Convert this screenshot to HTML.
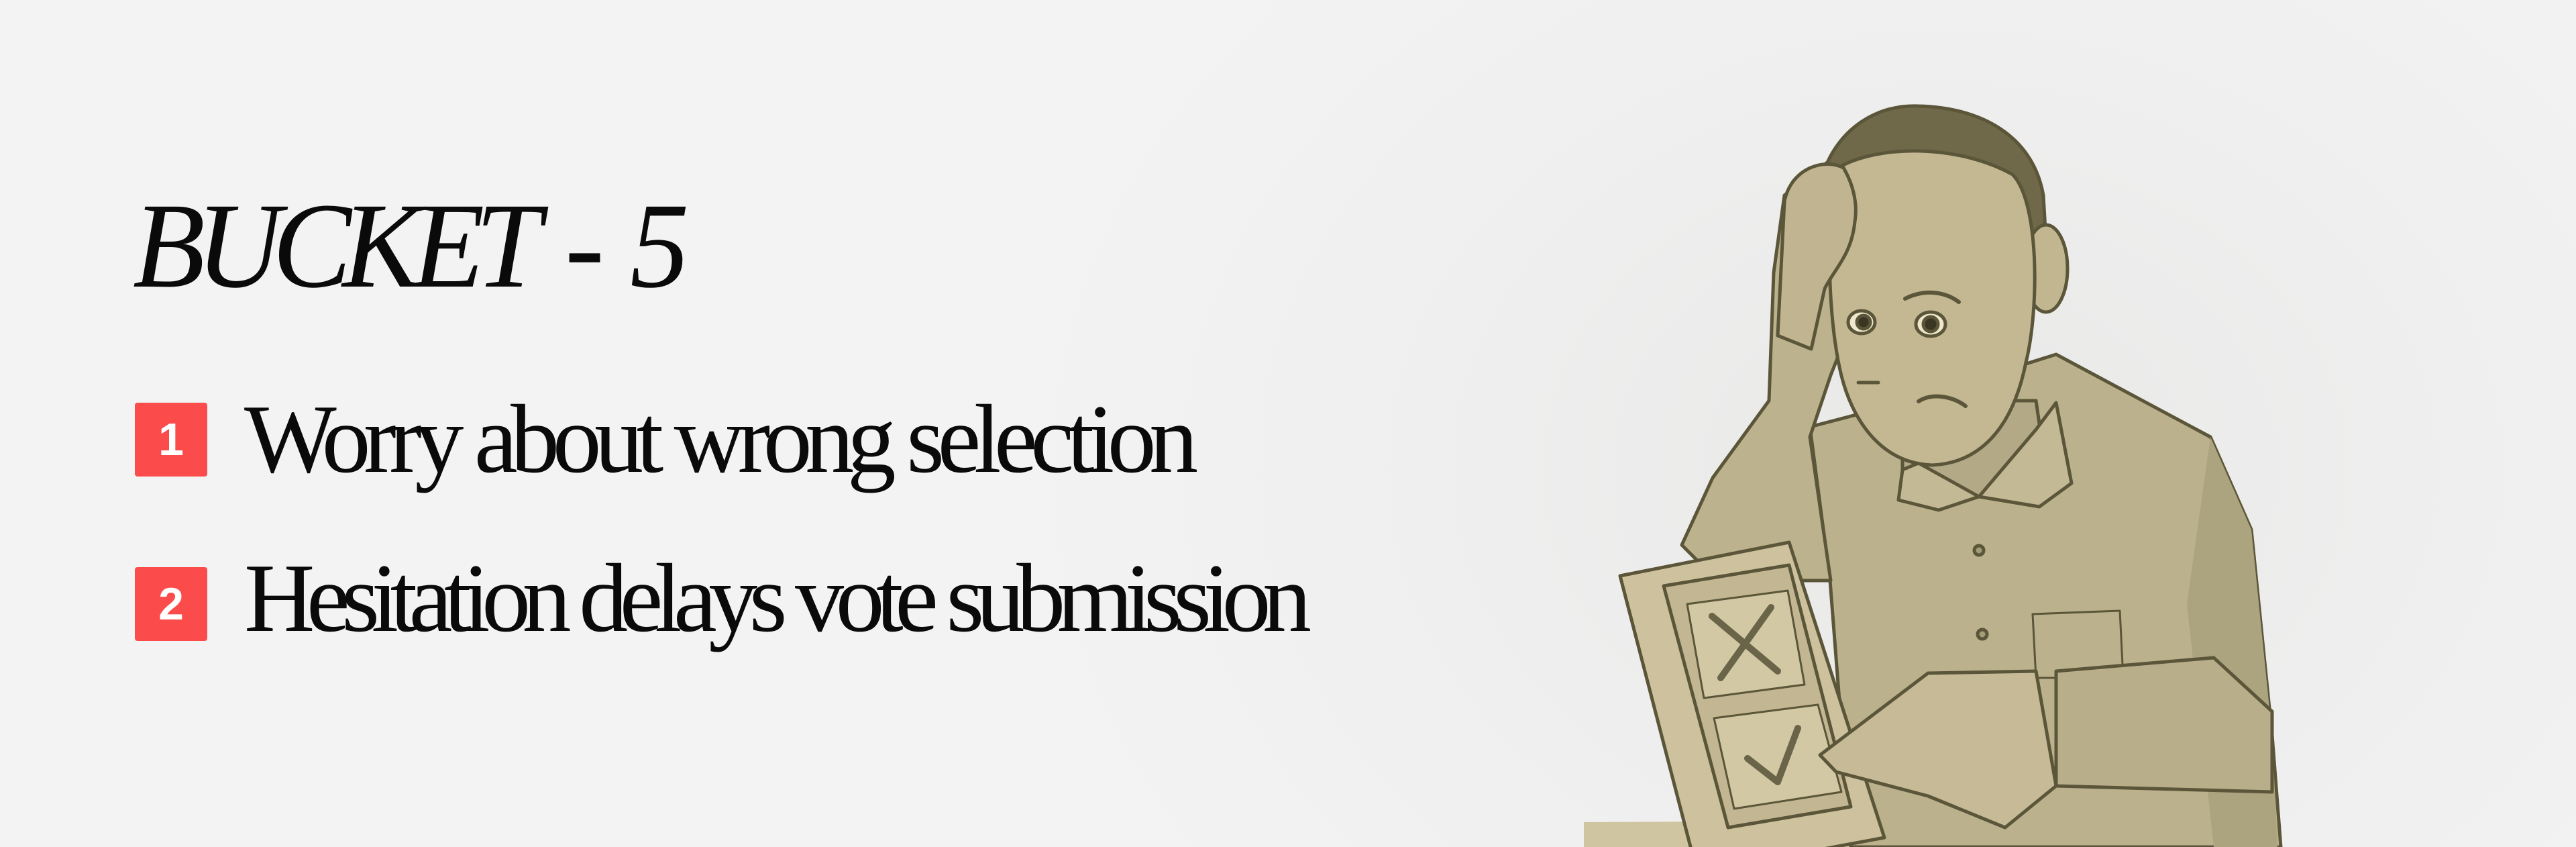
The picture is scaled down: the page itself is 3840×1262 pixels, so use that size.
<!DOCTYPE html>
<html><head><meta charset="utf-8"><style>
html,body{margin:0;padding:0}
body{width:3840px;height:1262px;overflow:hidden;position:relative;background:radial-gradient(ellipse 1400px 1100px at 2900px 700px,#e8e8e7 0%,#efefef 55%,#f3f3f3 100%);font-family:"Liberation Serif",serif}
.t{position:absolute;left:198px;top:276px;font-style:italic;font-size:182px;letter-spacing:-14px;word-spacing:22px;color:#0a0a0a;line-height:1;white-space:nowrap;transform:scaleX(0.97);transform-origin:left}
.sq{position:absolute;left:201px;width:108px;height:110px;background:#fb4b4b;border-radius:4px;color:#fff;font-family:"Liberation Sans",sans-serif;font-weight:bold;font-size:68px;line-height:110px;text-align:center}
.it{position:absolute;left:364px;font-size:146px;letter-spacing:-10px;color:#0a0a0a;line-height:1;white-space:nowrap}
svg{position:absolute;left:0;top:0}
</style></head><body>
<div class="t">BUCKET - 5</div>
<div class="sq" style="top:600px">1</div>
<div class="it" style="top:581px;letter-spacing:-10.5px">Worry about wrong selection</div>
<div class="sq" style="top:845px">2</div>
<div class="it" style="top:818px;letter-spacing:-12.5px">Hesitation delays vote submission</div>
<svg width="3840" height="1262" viewBox="0 0 3840 1262">
<g stroke="#5b5639" stroke-width="5" stroke-linejoin="round" stroke-linecap="round">
<path d="M2361 1225 L2989 1222 L3000 1262 L2361 1262 Z" fill="#cfc5a1" stroke="none"/>
<path d="M2698 636 L2836 600 L3065 528 L3295 651 L3356 789 L3387 1095 L3400 1262 L2759 1262 L2728 865 Z" fill="#bbb18d"/>
<path d="M3295 651 L3356 789 L3387 1095 L3395 1262 L3300 1262 L3260 900 Z" fill="#aca37f" stroke="none"/>
<path d="M2836 597 L3035 597 L3050 700 L2950 740 L2836 700 Z" fill="#b3a986"/>
<path d="M2836 700 L2830 745 L2890 760 L2950 740 L3040 755 L3088 720 L3065 600 L3035 640 L2950 740 L2860 690 Z" fill="#c3b995"/>
<path d="M3030 915 L3160 910 L3165 1010 L3035 1010 Z" fill="none" stroke-width="3"/>
<circle cx="2950" cy="820" r="7" fill="#a59c78"/><circle cx="2955" cy="945" r="7" fill="#a59c78"/>
<path d="M2507 812 L2553 712 L2637 597 L2644 406 L2660 291 L2729 238 L2774 330 L2759 483 L2729 559 L2698 651 L2729 865 L2667 865 L2530 835 Z" fill="#bcb28e"/>
<path d="M2717 260 C2740 190 2800 155 2860 158 C2950 160 3030 200 3046 291 L3050 360 L3000 330 C2960 250 2880 220 2780 250 Z" fill="#6f6849"/>
<ellipse cx="3050" cy="400" rx="32" ry="65" fill="#c2b690"/>
<path d="M2740 250 C2800 215 2920 215 3000 260 C3040 300 3040 460 3020 540 C3000 640 2950 690 2880 693 C2800 690 2760 620 2745 560 C2725 480 2720 330 2740 250 Z" fill="#c4b893"/>
<path d="M2660 300 C2670 250 2720 235 2748 250 C2760 270 2770 300 2765 330 C2760 380 2735 400 2720 430 L2700 520 L2650 500 Z" fill="#c0b590"/>
<ellipse cx="2878" cy="483" rx="22" ry="18" fill="#efe7cc"/><circle cx="2878" cy="483" r="11" fill="#3a3623"/>
<ellipse cx="2775" cy="480" rx="20" ry="17" fill="#efe7cc"/><circle cx="2778" cy="480" r="10" fill="#3a3623"/>
<path d="M2840 445 C2870 430 2900 435 2920 450" fill="none" stroke-width="6"/>
<path d="M2770 570 L2800 570" fill="none"/>
<path d="M2860 598 C2880 585 2910 590 2930 605" fill="none" stroke-width="6"/>
<path d="M3065 1000 L3300 980 L3387 1060 L3387 1180 L3065 1171 Z" fill="#b8ae8a"/>
<path d="M2415 858 L2667 808 L2809 1248 L2530 1300 Z" fill="#cdc29d"/>
<path d="M2480 873 L2667 842 L2759 1202 L2576 1233 Z" fill="#c2b792"/>
<path d="M2515 900 L2665 880 L2690 1020 L2540 1040 Z" fill="#d2c8a4" stroke-width="3"/>
<path d="M2552 918 L2650 1000 M2640 905 L2565 1010" fill="none" stroke="#6a6548" stroke-width="10"/>
<path d="M2555 1070 L2710 1050 L2745 1180 L2585 1205 Z" fill="#d2c8a4" stroke-width="3"/>
<path d="M2605 1130 L2650 1165 L2680 1085" fill="none" stroke="#6a6548" stroke-width="10"/>
<path d="M2713 1125 L2874 1003 L3035 1000 L3065 1171 L2989 1233 L2874 1186 L2737 1150 Z" fill="#c6bb96"/>
</g>
</svg>
</body></html>
